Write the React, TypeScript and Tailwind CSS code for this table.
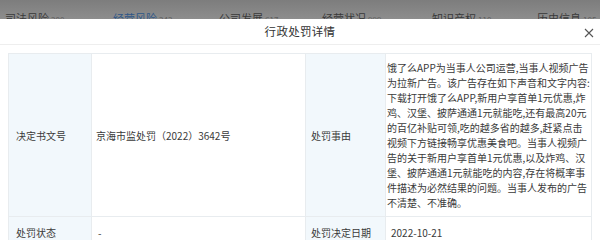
import React from "react";

const lines = [
  "饿了么APP为当事人公司运营,当事人视频广告",
  "为拉新广告。该广告存在如下声音和文字内容:",
  "下载打开饿了么APP,新用户享首单1元优惠,炸",
  "鸡、汉堡、披萨通通1元就能吃,还有最高20元",
  "的百亿补贴可领,吃的越多省的越多,赶紧点击",
  "视频下方链接畅享优惠美食吧。当事人视频广",
  "告的关于新用户享首单1元优惠,以及炸鸡、汉",
  "堡、披萨通通1元就能吃的内容,存在将概率事",
  "件描述为必然结果的问题。当事人发布的广告",
  "不清楚、不准确。",
];

const tabs = [
  { name: "司法风险", count: "200", active: false, w: "w-[108px]" },
  { name: "经营风险", count: "242", active: true, w: "w-[106px]" },
  { name: "公司发展", count: "617", active: false, w: "w-[103px]" },
  { name: "经营状况", count: "999", active: false, w: "w-[110px]" },
  { name: "知识产权", count: "110", active: false, w: "w-[105px]" },
  { name: "历史信息", count: "105", active: false, w: "w-[60px]" },
];

export default function App() {
  return (
    <div className="w-[600px] h-[240px] overflow-hidden bg-[#8b8b8b] flex flex-col font-['Noto_Sans_CJK_SC','Liberation_Sans',sans-serif] text-[#3a3a3a]">
      {/* dimmed background tabs */}
      <div className="h-[19px] shrink-0 overflow-hidden bg-gradient-to-b from-[#7d7d7d] to-[#8d8d8d] flex pl-[5px] pt-[11px]">
        {tabs.map((t) => (
          <div key={t.name} className={`${t.w} shrink-0 flex items-baseline gap-[2px] leading-[14px]`}>
            <span className={`text-[11px] ${t.active ? "text-[#2f5787]" : "text-[#3a3a3a]"}`}>{t.name}</span>
            <span className="text-[8px] text-[#5e5e5e]">{t.count}</span>
          </div>
        ))}
      </div>

      {/* modal */}
      <div className="flex-1 bg-white flex flex-col">
        <div className="h-[26px] shrink-0 border-b border-[#eeeeee] flex items-center justify-center relative">
          <span className="text-[11.5px] text-[#333] tracking-[0.3px]">行政处罚详情</span>
          <svg className="absolute right-[6px] top-[9px]" width="10" height="10" viewBox="0 0 10 10">
            <path d="M1 1 L9 9 M9 1 L1 9" stroke="#555" strokeWidth="1.1" fill="none" />
          </svg>
        </div>

        <div className="px-[8px] pt-[8px]">
          <div className="grid grid-cols-[83px_214px_80px_1fr] border-t border-l border-[#e8ecef] text-[10px]">
            {/* row 1 */}
            <div className="bg-[#f2f8fc] border-r border-b border-[#e8ecef] pl-[7px] flex items-center">决定书文号</div>
            <div className="border-r border-b border-[#e8ecef] pl-[4px] flex items-center">京海市监处罚（2022）3642号</div>
            <div className="bg-[#f2f8fc] border-r border-b border-[#e8ecef] pl-[5px] flex items-center">处罚事由</div>
            <div className="border-r border-b border-[#e8ecef] pl-[1px] py-[6px] leading-[15px]">
              {lines.map((l) => (
                <div key={l} className="whitespace-nowrap">{l}</div>
              ))}
            </div>
            {/* row 2 */}
            <div className="bg-[#f2f8fc] border-r border-b border-[#e8ecef] pl-[7px] h-[32px] flex items-center">处罚状态</div>
            <div className="border-r border-b border-[#e8ecef] pl-[6px] flex items-center">-</div>
            <div className="bg-[#f2f8fc] border-r border-b border-[#e8ecef] pl-[5px] flex items-center">处罚决定日期</div>
            <div className="border-r border-b border-[#e8ecef] pl-[5px] flex items-center">2022-10-21</div>
          </div>
        </div>
      </div>
    </div>
  );
}
